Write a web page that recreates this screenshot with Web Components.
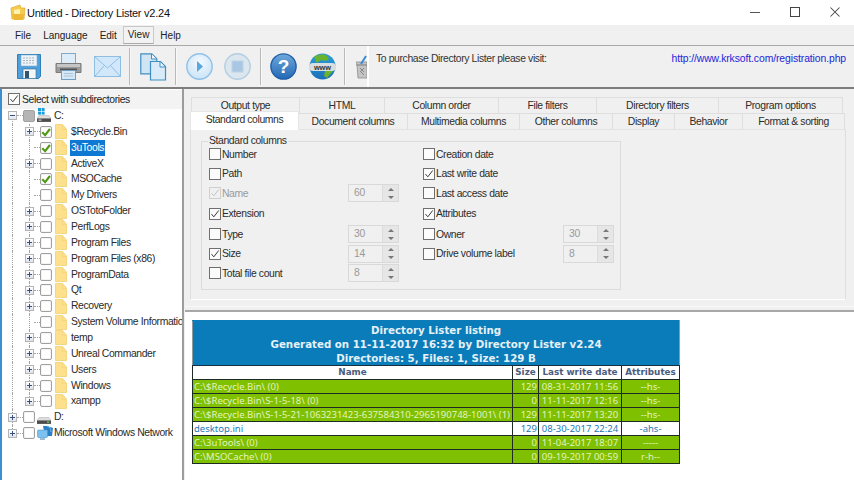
<!DOCTYPE html>
<html><head><meta charset="utf-8">
<style>
html,body{margin:0;padding:0;width:854px;height:480px;overflow:hidden;background:#f0f0f0}
body{font:10px/13px "Liberation Sans",sans-serif;color:#1a1a1a}
</style></head><body>
<dl-app></dl-app>
<script>
const def=(name,html,init)=>customElements.define(name,class extends HTMLElement{
  connectedCallback(){ if(this.shadowRoot)return; const r=this.attachShadow({mode:'open'}); r.innerHTML=typeof html==='function'?html(this):html; init&&init(this,r);} });
const UI='"Liberation Sans",sans-serif';
const TXT=`font:10.4px ${UI};letter-spacing:-.38px;`;

const ICONS={
save:`<svg width="26" height="27" viewBox="0 0 26 27"><path d="M1.5 1.5h23v22l-2 2h-21z" fill="#4e9fdc" stroke="#2f7fb8"/><rect x="5" y="2" width="16" height="11" fill="#eef4f8" stroke="#7fb0d0" stroke-width=".6"/><path d="M7 5h12M7 7.5h12M7 10h12" stroke="#a8b4bc" stroke-dasharray="2 1"/><rect x="7" y="16" width="13" height="9.5" fill="#f4f6f8" stroke="#3a6e96" stroke-width=".6"/><rect x="9" y="18" width="4" height="7" fill="#33566f"/></svg>`,
print:`<svg width="27" height="27" viewBox="0 0 27 27"><rect x="6.5" y=".5" width="14" height="10" fill="#dcecf8" stroke="#7fa9c9"/><path d="M1 10.5h25v9H1z" fill="#9b9b9b" stroke="#7b7b7b"/><rect x="2" y="11" width="23" height="3" fill="#c5c5c5"/><rect x="5" y="15.5" width="17" height="2" fill="#555"/><rect x="6.5" y="17.5" width="14" height="9" fill="#d6e8f6" stroke="#6f9fc4"/><path d="M9 20.5h9M9 23h9" stroke="#a9c5dc"/></svg>`,
mail:`<svg width="27" height="22" viewBox="0 0 27 22"><rect x=".5" y=".5" width="26" height="20" fill="#d2e8fa" stroke="#8dbfe4"/><path d="M1 1l12.5 11L26 1M1 20l9-10M26 20l-9-10" fill="none" stroke="#8dbfe4"/></svg>`,
copy:`<svg width="27" height="28" viewBox="0 0 27 28"><path d="M.8.8h11l5 5v15H.8z" fill="#cfe4f5" stroke="#3f8fc0" stroke-width="1.2"/><path d="M11.5 1v5h5" fill="#eef6fc" stroke="#3f8fc0"/><path d="M10.5 8.5h10l5 5v13.5H10.5z" fill="#d9ebf8" stroke="#3f8fc0" stroke-width="1.2"/><path d="M20 9v5h5" fill="#eef6fc" stroke="#3f8fc0"/></svg>`,
play:`<svg width="27" height="27" viewBox="0 0 27 27"><defs><radialGradient id="p" cx=".5" cy=".35" r=".75"><stop offset="0" stop-color="#f4faff"/><stop offset="1" stop-color="#c4e0f6"/></radialGradient></defs><circle cx="13.5" cy="13.5" r="12.7" fill="url(#p)" stroke="#8fc1e8" stroke-width="1.4"/><path d="M11 8l6 5.5-6 5.5z" fill="#5aa8e2"/></svg>`,
stop:`<svg width="27" height="27" viewBox="0 0 27 27"><circle cx="13.5" cy="13.5" r="12.7" fill="#dbe6ef" stroke="#b3cee2" stroke-width="1.4"/><rect x="8" y="8" width="11" height="11" fill="#a9c7e2" stroke="#bcd3e6"/></svg>`,
help:`<svg width="27" height="27" viewBox="0 0 27 27"><defs><linearGradient id="h" x1="0" y1="0" x2="0" y2="1"><stop offset="0" stop-color="#6fa9dc"/><stop offset="1" stop-color="#2468b4"/></linearGradient></defs><circle cx="13.5" cy="13.5" r="12.6" fill="url(#h)" stroke="#1f5ea8" stroke-width="1.4"/><text x="13.5" y="20" text-anchor="middle" font-family="Liberation Sans,sans-serif" font-weight="700" font-size="19" fill="#fff">?</text></svg>`,
www:`<svg width="27" height="27" viewBox="0 0 27 27"><defs><linearGradient id="w" x1="0" y1="0" x2="0" y2="1"><stop offset="0" stop-color="#2c9fd8"/><stop offset="1" stop-color="#1c6fb8"/></linearGradient></defs><circle cx="13.5" cy="13.5" r="13" fill="url(#w)"/><path d="M5 4c5-3 10-3 13-1l2 3-3 2-5-1-4 3zM16 18l7-2 1 2-6 7-3-2z" fill="#69b32e"/><rect x="0" y="10" width="27" height="8" rx="4" fill="#d8dde0"/><text x="13.5" y="16.6" text-anchor="middle" font-family="Liberation Sans,sans-serif" font-weight="700" font-size="7.4" fill="#333">www</text></svg>`,
trash:`<svg width="11" height="24" viewBox="0 0 11 24"><path d="M0 7h11v3H0zM1 10h10v13H2z" fill="#c4c4c4" stroke="#8d8d8d" stroke-width=".8"/><path d="M4 13l4 4m0-4l-4 4M5 17l3 3" stroke="#888"/><path d="M5 9l5-8" stroke="#3a8fd8" stroke-width="2"/></svg>`
};

def('tb-icon',h=>`<style>:host{display:flex;align-items:center;height:40px;flex:none}svg{display:block}</style>${ICONS[h.getAttribute('name')]}`);
def('tb-sep',`<style>:host{display:block;width:1px;height:37px;background:#b9b9b9;border-right:1px solid #f8f8f8;flex:none;align-self:center}</style>`);

def('title-bar',`<style>:host{display:flex;align-items:center;height:25px;background:#fff;color:#111;font:11px ${UI};letter-spacing:-.25px;flex:none;padding-left:10px}
.t{margin-left:1px;white-space:nowrap}.b{margin-left:auto;display:flex;margin-right:14px;gap:30px;align-items:center;margin-top:-2px}svg{display:block}</style>
<svg width="16" height="17" viewBox="0 0 16 17"><path d="M1 4l9-3 1 3 4 0-1 11H2z" fill="#f5cd4e" stroke="#dca92b" stroke-width=".7"/><path d="M4 6l6-1v8l-6 1z" fill="#fff3b0"/><path d="M2 10l2 6h9l1-6z" fill="#eeb834"/></svg>
<span class="t">Untitled - Directory Lister v2.24</span>
<span class="b">
<svg width="10" height="10" viewBox="0 0 10 10"><path d="M0 5.5h10" stroke="#555"/></svg>
<svg width="10" height="10" viewBox="0 0 10 10"><rect x=".5" y=".5" width="9" height="9" fill="none" stroke="#444"/></svg>
<svg width="10" height="10" viewBox="0 0 10 10"><path d="M.5.5l9 9m0-9l-9 9" stroke="#444" stroke-width="1.05"/></svg>
</span>`);

def('menu-bar',`<style>:host{display:flex;align-items:center;height:20px;background:#f0f0f0;border-bottom:1px solid #a9a9a9;flex:none;padding-left:9px;font:10px ${UI};color:#222}
span{display:block;padding:0 6px;height:17px;line-height:17px}.on{background:#f2f2f2;border:1px solid #c8c8c8;border-bottom-color:#aaa;padding:0 4px;height:16px;line-height:16px}</style>
<span>File</span><span>Language</span><span>Edit</span><span class="on">View</span><span>Help</span>`);

def('tool-bar',`<style>:host{display:flex;align-items:center;height:41px;background:#f0f0f0;flex:none;padding-left:16px;border-bottom:2px solid #7d7d7d;box-sizing:content-box}
.i{flex:1;align-self:stretch;margin-left:0;border-left:2px solid #fff;display:flex;justify-content:space-between;padding:6px 8px 0 7px;${TXT}line-height:13px;color:#333}a{color:#2424d8;text-decoration:none;letter-spacing:-.1px}</style>
<tb-icon name="save"></tb-icon>
<tb-icon name="print" style="margin-left:13px"></tb-icon>
<tb-icon name="mail" style="margin-left:12px"></tb-icon>
<tb-sep style="margin-left:8px"></tb-sep>
<tb-icon name="copy" style="margin-left:9px"></tb-icon>
<tb-sep style="margin-left:8px"></tb-sep>
<tb-icon name="play" style="margin-left:9px"></tb-icon>
<tb-icon name="stop" style="margin-left:11px"></tb-icon>
<tb-sep style="margin-left:9px"></tb-sep>
<tb-icon name="help" style="margin-left:8px"></tb-icon>
<tb-icon name="www" style="margin-left:12px"></tb-icon>
<tb-sep style="margin-left:8px"></tb-sep>
<tb-icon name="trash" style="margin-left:10px"></tb-icon>
<div class="i"><span>To purchase Directory Lister please visit:</span><a>http://www.krksoft.com/registration.php</a></div>`);

const FOLDER=`<svg width="12" height="15" viewBox="0 0 12 15"><path d="M.5.5h7l4 4.5v9.5H.5z" fill="#fde08c" stroke="#f1cf75" stroke-width=".8"/><path d="M7.5 1v4.500h4" fill="none" stroke="#f6d67e"/></svg>`;
const DRIVEC=`<svg width="14" height="16" viewBox="0 0 14 16"><rect x="1" y="0" width="3" height="3" fill="#1b9ddd"/><rect x="4.6" y="0" width="3" height="3" fill="#1b9ddd"/><rect x="1" y="3.600" width="3" height="3" fill="#1b9ddd"/><rect x="4.6" y="3.600" width="3" height="3" fill="#1b9ddd"/><path d="M2 7.500h10l2 3H0z" fill="#ddd" stroke="#aaa" stroke-width=".5"/><rect x="0" y="10.500" width="14" height="3.400" fill="#4c4c4c"/><rect x="1.5" y="11.500" width="3" height="1.200" fill="#cfcfcf"/></svg>`;
const DRIVED=`<svg width="14" height="16" viewBox="0 0 14 16"><path d="M2 8.500h10l2 3H0z" fill="#ddd" stroke="#aaa" stroke-width=".5"/><rect x="0" y="11.500" width="14" height="3.400" fill="#4c4c4c"/><rect x="10" y="12.500" width="2.400" height="1.200" fill="#5fd35f"/></svg>`;
const NET=`<svg width="16" height="16" viewBox="0 0 16 16"><path d="M6 1h4l6 2-1 8H8z" fill="#2b7fc4"/><path d="M10 1c3 1 4 3 4 6" stroke="#6dbbe8" fill="none"/><rect x=".5" y="5" width="10" height="7.500" rx="1" fill="#7cc1f0" stroke="#4d95cc" stroke-width=".6"/><rect x="3" y="13" width="5" height="2" fill="#9dbdd6"/></svg>`;

def('tree-row',h=>{
 const lvl=+h.getAttribute('level'), exp=h.getAttribute('exp'), chk=h.getAttribute('chk'), sel=h.hasAttribute('sel'), kind=h.getAttribute('kind')||'folder', last=h.hasAttribute('last');
 const box=chk==='gray'?'<span class="cb gray"></span>':chk==='on'?`<span class="cb"><svg width="12" height="12" viewBox="0 0 12 12"><path d="M2.300 6.200l2.800 3 4.800-6.200" fill="none" stroke="#4f9a12" stroke-width="2.100"/></svg></span>`:'<span class="cb"></span>';
 const ic={folder:FOLDER,c:DRIVEC,d:DRIVED,net:NET}[kind];
 const x=exp==='none'?'':`<span class="ex">${exp==='minus'?'<i class="h"></i>':'<i class="h"></i><i class="v"></i>'}</span>`;
 return `<style>:host{display:flex;align-items:center;height:15.87px;position:relative;white-space:nowrap;${TXT}color:#2a2a2a}
 .ind{position:relative;flex:none;height:100%;width:${lvl?23:6}px}
 .v0{position:absolute;left:10px;top:${h.hasAttribute('first')?'50%':'0'};bottom:${h.hasAttribute('end')?'50%':'0'};border-left:1px dotted #a4a4a4}
 .v1{position:absolute;left:27px;top:0;bottom:${last?'50%':'0'};border-left:1px dotted #a4a4a4}
 .ex{position:relative;box-sizing:border-box;flex:none;width:9px;height:9px;border:1px solid #b4b4b4;background:linear-gradient(#fff,#dfe4ec);z-index:1}
 .ex i{position:absolute;background:#3a4f80}.ex .h{left:1px;top:3px;width:5px;height:1px}.ex .v{left:3px;top:1px;width:1px;height:5px}
 .ln{flex:none;height:0;border-top:1px dotted #a4a4a4;width:6px;}
 .cb{box-sizing:border-box;flex:none;width:12px;height:12px;border:1px solid #a0a0a0;border-radius:2px;background:#fff;display:block;position:relative;box-shadow:inset 0 0 0 1px #f4f4f4}
 .cb svg{position:absolute;left:-1px;top:-1px}.gray{background:#b5b5b5;box-shadow:none}
 .ic{flex:none;margin-left:${lvl?3:2}px;height:${lvl?15:16}px;width:${lvl?12:14}px;display:block}.ic svg{display:block}
 .tx{margin-left:${lvl?3:2}px;padding:0 1px;height:16px;line-height:16px;${sel?'background:#0f78d2;color:#fff;':''}}
 </style><span class="v0"></span>${lvl?'<span class="v1"></span>':''}<span class="ind"></span>${x}<span class="ln" ${exp==='none'?`style="margin-left:9px;width:6px"`:''}></span>${box}<span class="ic" ${kind==='net'?'style="width:16px"':''}>${ic}</span><span class="tx" ${kind==='net'?'style="margin-left:0"':''}><slot></slot></span>`;
});

def('tree-panel',`<style>:host{display:flex;flex-direction:column;flex:none;width:180px;background:#fff;border-left:2px solid #3d8ed0;border-right:2px solid #9c9c9c;overflow:hidden;box-sizing:content-box;margin-right:1px}
.top{display:flex;align-items:center;height:18px;background:#f3f3f3;flex:none;padding-left:6px;${TXT}color:#222;margin-top:1px;padding-bottom:1px}
.list{flex:1;margin-top:-1px;overflow:hidden}
d-check{margin-right:2px}</style>
<div class="top"><d-check checked></d-check>Select with subdirectories</div><div class="list"><slot></slot></div>`);

def('d-check',h=>{const c=h.hasAttribute('checked'),d=h.hasAttribute('disabled');
 return `<style>:host{display:block;flex:none;box-sizing:border-box;width:12px;height:12px;border:1px solid ${d?'#cfcfcf':'#6f6f6f'};background:${d?'#f0f0f0':'#fbfbfb'}}svg{display:block}</style>${c?`<svg width="10" height="10" viewBox="0 0 11 11"><path d="M1.600 5.600l2.600 3 5.400-7" fill="none" stroke="${d?'#c4c4c4':'#3c3c3c'}" stroke-width="1.100"/></svg>`:''}`});

def('d-spin',h=>`<style>:host{display:flex;box-sizing:border-box;width:51px;height:18px;border:1px solid #d9d9d9;background:#f0f0f0;color:#9a9a9a;font:10.4px/16px ${UI}}
.v{flex:1;padding-left:5px}.a{width:15px;background:#e6e6e6;border-left:1px solid #dcdcdc;display:flex;flex-direction:column;justify-content:space-around;align-items:center}
.a i{display:block;width:0;height:0;border:3px solid transparent;border-top:0;border-bottom:3px solid #777}.a i+i{border-bottom:0;border-top:3px solid #777}</style><div class="v"><slot></slot></div><div class="a"><i></i><i></i></div>`);

def('d-opt',h=>{const dis=h.hasAttribute('disabled');
 return `<style>:host{display:flex;align-items:center;height:100%;white-space:nowrap;${TXT}color:${dis?'#9a9a9a':'#2c2c2c'}}
 .l{margin-left:1px}.s{margin-left:auto}</style><d-check ${h.hasAttribute('checked')?'checked':''} ${dis?'disabled':''}></d-check><span class="l">${h.getAttribute('label')}</span>${h.hasAttribute('spin')?`<d-spin class="s">${h.getAttribute('spin')}</d-spin>`:''}`});

def('tab-strip',h=>{
 const rows=[[['Output type',109],['HTML',85],['Column order',114],['File filters',98],['Directory filters',122],['Program options',124]],
 [['Standard columns',109,1],['Document columns',109],['Multimedia columns',112],['Other columns',93],['Display',62],['Behavior',68],['Format &amp; sorting',102]]];
 const mk=(r,ml)=>`<div class="r" style="margin-left:${ml}px">${r.map(t=>`<span class="t${t[2]?' on':''}" style="width:${t[1]}px">${t[0]}</span>`).join('')}</div>`;
 return `<style>:host{display:block;flex:none;${TXT}line-height:15px;color:#2c2c2c;position:relative;z-index:1}
 .r{display:flex;height:16px}.t{box-sizing:border-box;text-align:center;border:1px solid #dedede;border-left-width:0;border-bottom:0;background:#f0f0f0;display:block}
 .r .t:first-child{border-left-width:1px}.on{background:#fff;height:19px;margin-top:-2px;line-height:15px;border-color:#e6e6e6;position:relative}</style>${mk(rows[0],6)}${mk(rows[1],5)}`});

def('options-page',`<style>:host{display:block;flex:none;box-sizing:border-box;margin-left:5px;width:656px;height:171px;background:#f0f0f0;border:1px solid #dedede;border-top-color:#e3e3e3;border-bottom:1px solid #fff;padding:5px 0 0 10px}
fieldset{display:block;box-sizing:border-box;margin:0;width:420px;height:155px;border:1px solid #dcdcdc;padding:0;position:relative}
legend{padding:0 1px;margin-left:6px;${TXT}line-height:12px;color:#2c2c2c}
.g{display:grid;grid-template-columns:190px 191px;column-gap:24px;grid-template-rows:20px 19px 20px 21px 20px 19px 20px;margin:-3px 0 0 7px}</style>
<fieldset><legend>Standard columns</legend><div class="g">
<d-opt label="Number"></d-opt><d-opt label="Creation date"></d-opt>
<d-opt label="Path"></d-opt><d-opt label="Last write date" checked></d-opt>
<d-opt label="Name" checked disabled spin="60"></d-opt><d-opt label="Last access date"></d-opt>
<d-opt label="Extension" checked></d-opt><d-opt label="Attributes" checked></d-opt>
<d-opt label="Type" spin="30"></d-opt><d-opt label="Owner" spin="30"></d-opt>
<d-opt label="Size" checked spin="14"></d-opt><d-opt label="Drive volume label" spin="8"></d-opt>
<d-opt label="Total file count" spin="8"></d-opt><span></span>
</div></fieldset>`);

def('listing-table',()=>{
 const rows=[['C:\\$Recycle.Bin\\ (0)','129','08-31-2017 11:56','--hs-',1],['C:\\$Recycle.Bin\\S-1-5-18\\ (0)','0','11-11-2017 12:16','--hs-',1],['C:\\$Recycle.Bin\\S-1-5-21-1063231423-637584310-2965190748-1001\\ (1)','129','11-11-2017 13:20','--hs-',1],['desktop.ini','129','08-30-2017 22:24','-ahs-',0],['C:\\3uTools\\ (0)','0','11-04-2017 18:07','-----',1],['C:\\MSOCache\\ (0)','0','09-19-2017 00:59','r-h--',1]];
 return `<style>:host{display:block;flex:none;width:488px;margin:8px 0 0 7px}
 table{border-collapse:collapse;table-layout:fixed;width:488px;font:9.5px/13px "Noto Sans",sans-serif;border:1px solid #8f9a9f}
 td,th{border:1px solid #1d2b22;padding:0 1px;height:13px;overflow:hidden;white-space:nowrap;box-sizing:content-box}
 .hd{background:#0a7cba;color:#e6f1f7;font:bold 10.25px/14px "DejaVu Sans",sans-serif;text-align:center;height:43px;padding:1px 0 0;border-color:#0a7cba #8f9a9f #16303f}
 th{background:#fff;color:#4b5c80;font:bold 8.8px/13px "DejaVu Sans",sans-serif}
 tr.g td{background:#7fc000;color:#e4f3c2}tr.f td{background:#fff;color:#1d78b4}
 .r{text-align:right}.c{text-align:center}</style>
 <table><colgroup><col style="width:320px"><col style="width:26px"><col style="width:83px"><col style="width:58px"></colgroup>
 <tr><td class="hd" colspan="4">Directory Lister listing<br>Generated on 11-11-2017 16:32 by Directory Lister v2.24<br>Directories: 5, Files: 1, Size: 129 B</td></tr>
 <tr><th>Name</th><th>Size</th><th>Last write date</th><th>Attributes</th></tr>
 ${rows.map(r=>`<tr class="${r[4]?'g':'f'}"><td>${r[0]}</td><td class="r">${r[1]}</td><td class="c">${r[2]}</td><td class="c">${r[3]}</td></tr>`).join('')}</table>`});

def('right-pane',`<style>:host{display:flex;flex-direction:column;flex:1;min-width:0}
.top{height:221px;flex:none;background:#f0f0f0;padding-top:8px;box-sizing:border-box;display:flex;flex-direction:column;box-shadow:inset 0 -3px 0 #f0f0f0,inset 0 -4px 0 #f8f8f8}
.sp{flex:none;height:2px;background:#a8a8a8}
.bot{flex:1;background:#fff;min-height:0;overflow:hidden}</style>
<div class="top"><tab-strip></tab-strip><options-page></options-page></div><div class="sp"></div><div class="bot"><listing-table></listing-table></div>`);

def('dl-app',`<style>:host{display:flex;flex-direction:column;width:854px;height:480px;overflow:hidden;background:#f0f0f0}
.m{flex:1;display:flex;min-height:0}</style>
<title-bar></title-bar><menu-bar></menu-bar><tool-bar></tool-bar>
<div class="m"><tree-panel id="tp"></tree-panel><right-pane></right-pane></div>`,(h,r)=>{
 const tp=r.getElementById('tp');
 const items=[[0,'minus','gray','c','C:','first'],[1,'plus','on','folder','$Recycle.Bin'],[1,'none','on','folder','3uTools','sel'],[1,'plus','','folder','ActiveX'],[1,'none','on','folder','MSOCache'],[1,'none','','folder','My Drivers'],[1,'plus','','folder','OSTotoFolder'],[1,'plus','','folder','PerfLogs'],[1,'plus','','folder','Program Files'],[1,'plus','','folder','Program Files (x86)'],[1,'plus','','folder','ProgramData'],[1,'plus','','folder','Qt'],[1,'plus','','folder','Recovery'],[1,'none','','folder','System Volume Information'],[1,'plus','','folder','temp'],[1,'plus','','folder','Unreal Commander'],[1,'plus','','folder','Users'],[1,'plus','','folder','Windows'],[1,'plus','','folder','xampp','last'],[0,'plus','','d','D:'],[0,'plus','','net','Microsoft Windows Network','end']];
 items.forEach(i=>{const e=document.createElement('tree-row');e.setAttribute('level',i[0]);e.setAttribute('exp',i[1]);e.setAttribute('chk',i[2]);e.setAttribute('kind',i[3]);if(i[5])e.setAttribute(i[5],'');e.textContent=i[4];tp.appendChild(e);});
});
</script>
</body></html>
